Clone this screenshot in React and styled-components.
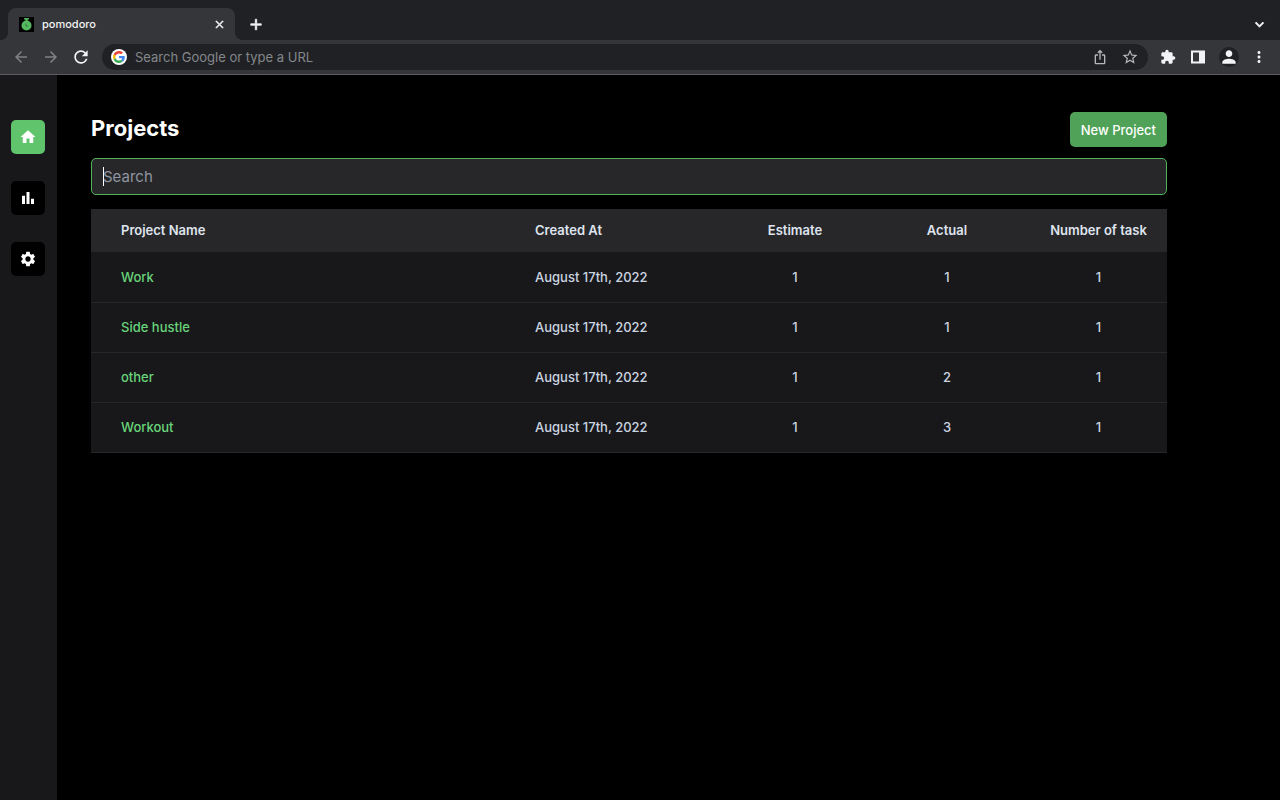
import React, { useState } from 'react';
import styled, { createGlobalStyle } from 'styled-components';
import {
  MdAdd,
  MdArrowBack,
  MdArrowForward,
  MdBarChart,
  MdClose,
  MdExtension,
  MdHome,
  MdIosShare,
  MdKeyboardArrowDown,
  MdMoreVert,
  MdPerson,
  MdRefresh,
  MdSettings,
  MdStarBorder,
} from 'react-icons/md';

const GlobalStyle = createGlobalStyle`
  * {
    box-sizing: border-box;
  }
  body {
    margin: 0;
    background-color: #000000;
    color: #e2e8f0;
    font-family: 'Inter', sans-serif;
    font-size: 13px;
  }
  button,
  input {
    font-family: inherit;
  }
`;

const Window = styled.div`
  display: flex;
  flex-direction: column;
  min-height: 100vh;
`;

const TabStrip = styled.div`
  display: flex;
  align-items: flex-end;
  height: 40px;
  padding: 0 10px 0 8px;
  background-color: #202124;
`;

const Tab = styled.div`
  position: relative;
  display: flex;
  align-items: center;
  width: 227px;
  height: 32px;
  padding: 0 8px 0 11px;
  border-radius: 8px 8px 0 0;
  background-color: #35363a;

  &::before,
  &::after {
    content: '';
    position: absolute;
    bottom: 0;
    width: 8px;
    height: 8px;
  }
  &::before {
    right: 100%;
    background: radial-gradient(circle at 0 0, transparent 8px, #35363a 8px);
  }
  &::after {
    left: 100%;
    background: radial-gradient(circle at 100% 0, transparent 8px, #35363a 8px);
  }
`;

const TabTitle = styled.span`
  flex: 1;
  margin-left: 8px;
  color: #f1f3f4;
  font-size: 11px;
  font-weight: 500;
`;

const IconButton = styled.button`
  display: flex;
  align-items: center;
  justify-content: center;
  flex: none;
  width: ${(props) => props.$width || 16}px;
  height: 28px;
  padding: 0;
  border: none;
  background: none;
  color: ${(props) => props.$color || '#f1f3f4'};
  font-size: ${(props) => props.$size || 16}px;
  cursor: pointer;

  svg {
    stroke-width: ${(props) => (props.$bold ? 1 : 0)};
  }
  path[fill='none'] {
    stroke: none;
  }
`;

const NewTabArea = styled.div`
  display: flex;
  flex: 1;
  align-items: center;
  justify-content: space-between;
  height: 32px;
  padding-left: 12px;
`;

const Toolbar = styled.div`
  display: flex;
  align-items: center;
  height: 35px;
  padding: 0 6px;
  border-bottom: 1px solid #5c5d60;
  background-color: #35363a;
`;

const AddressBar = styled.div`
  display: flex;
  flex: 1;
  align-items: center;
  height: 26px;
  margin: 0 5px 0 6px;
  padding: 0 3px 0 9px;
  border-radius: 13px;
  background-color: #202124;
`;

const GoogleBadge = styled.span`
  display: flex;
  align-items: center;
  justify-content: center;
  width: 16px;
  height: 16px;
  border-radius: 50%;
  background-color: #ffffff;
`;

const AddressInput = styled.input`
  flex: 1;
  min-width: 0;
  margin-left: 8px;
  padding: 0;
  border: none;
  outline: none;
  background: none;
  color: #e8eaed;
  font-size: 13px;
  &::placeholder {
    color: #84878b;
    opacity: 1;
  }
`;

const ToolbarActions = styled.div`
  display: flex;
  align-items: center;
`;

const Avatar = styled.span`
  display: flex;
  align-items: center;
  justify-content: center;
  width: 20px;
  height: 20px;
  border-radius: 50%;
  background-color: #202124;
`;

const Page = styled.div`
  display: flex;
  flex: 1;
`;

const Sidebar = styled.nav`
  display: flex;
  flex-direction: column;
  flex: none;
  gap: 27px;
  width: 57px;
  padding: 45px 12px 0 11px;
  background-color: #18181b;
`;

const SidebarLink = styled.a`
  display: flex;
  align-items: center;
  justify-content: center;
  height: 34px;
  border-radius: 5px;
  background-color: ${(props) => (props.$active ? '#5fc46b' : '#000000')};
  color: #ffffff;
  font-size: 18px;
`;

const Content = styled.main`
  flex: 1;
  padding: 37px 113px 0 34px;
`;

const Header = styled.header`
  display: flex;
  align-items: flex-start;
  justify-content: space-between;
  margin-bottom: 11px;
`;

const Title = styled.h1`
  margin: 0;
  color: #ffffff;
  font-size: 22px;
  font-weight: 700;
  line-height: 32px;
`;

const PrimaryButton = styled.button`
  height: 35px;
  padding: 0 11px;
  border: none;
  border-radius: 5px;
  background-color: #4fa257;
  color: #ffffff;
  font-size: 13px;
  font-weight: 500;
  cursor: pointer;
`;

const SearchField = styled.div`
  position: relative;
  margin-bottom: 14px;

  &::before {
    content: '';
    position: absolute;
    top: 9px;
    left: 12px;
    width: 1px;
    height: 19px;
    background-color: #ffffff;
  }
`;

const SearchInput = styled.input`
  display: block;
  width: 100%;
  height: 37px;
  padding: 0 11px;
  border: 1px solid #4fb35a;
  border-radius: 5px;
  outline: none;
  background-color: #27272a;
  caret-color: transparent;
  color: #e2e8f0;
  font-size: 15px;
  &::placeholder {
    color: #8f95a1;
    opacity: 1;
  }
`;

const Table = styled.table`
  width: 100%;
  border-collapse: collapse;
  table-layout: fixed;
  font-size: 13px;
  font-weight: 500;
`;

const Col = styled.col`
  width: ${(props) => props.$width};
`;

const HeadCell = styled.th`
  height: 43px;
  padding: 0 ${(props) => (props.$center ? 0 : 30)}px 2px;
  background-color: #27272a;
  color: #dfe4ee;
  font-weight: 600;
  text-align: ${(props) => (props.$center ? 'center' : 'left')};
  white-space: nowrap;
`;

const Row = styled.tr`
  border-bottom: 1px solid #27272a;
  background-color: #18181b;
`;

const Cell = styled.td`
  height: 50px;
  padding: 0 ${(props) => (props.$center ? 0 : 30)}px;
  color: #cbd5e1;
  text-align: ${(props) => (props.$center ? 'center' : 'left')};
`;

const ProjectLink = styled.a`
  color: #68d47a;
  text-decoration: none;
`;

const PROJECTS = [
  { name: 'Work', createdAt: 'August 17th, 2022', estimate: 1, actual: 1, tasks: 1 },
  { name: 'Side hustle', createdAt: 'August 17th, 2022', estimate: 1, actual: 1, tasks: 1 },
  { name: 'other', createdAt: 'August 17th, 2022', estimate: 1, actual: 2, tasks: 1 },
  { name: 'Workout', createdAt: 'August 17th, 2022', estimate: 1, actual: 3, tasks: 1 },
];

function PomodoroIcon() {
  return (
    <svg width="15" height="15" viewBox="0 0 30 30" aria-hidden="true">
      <rect width="30" height="30" fill="#000000" />
      <rect x="10" y="2" width="10" height="3" rx="1" fill="#56b962" />
      <rect x="13" y="4" width="4" height="4" fill="#56b962" />
      <circle cx="15" cy="17" r="10" fill="#56b962" />
      <path d="M14 13v5h4" fill="none" stroke="#2f7a39" strokeWidth="2" />
    </svg>
  );
}

function GoogleIcon() {
  return (
    <svg width="12" height="12" viewBox="0 0 48 48" aria-hidden="true">
      <path
        fill="#ea4335"
        d="M24 9.5c3.54 0 6.71 1.22 9.21 3.6l6.85-6.85C35.9 2.38 30.47 0 24 0 14.62 0 6.51 5.38 2.56 13.22l7.98 6.19C12.43 13.72 17.74 9.5 24 9.5z"
      />
      <path
        fill="#4285f4"
        d="M46.98 24.55c0-1.57-.15-3.09-.38-4.55H24v9.02h12.94c-.58 2.96-2.26 5.48-4.78 7.18l7.73 6c4.51-4.18 7.09-10.36 7.09-17.65z"
      />
      <path
        fill="#fbbc05"
        d="M10.53 28.59c-.48-1.45-.76-2.99-.76-4.59s.27-3.14.76-4.59l-7.98-6.19C.92 16.46 0 20.12 0 24c0 3.88.92 7.54 2.56 10.78l7.97-6.19z"
      />
      <path
        fill="#34a853"
        d="M24 48c6.48 0 11.93-2.13 15.89-5.81l-7.73-6c-2.15 1.45-4.92 2.3-8.16 2.3-6.26 0-11.57-4.22-13.47-9.91l-7.98 6.19C6.51 42.62 14.62 48 24 48z"
      />
    </svg>
  );
}

function SidePanelIcon() {
  return (
    <svg width="16" height="14" viewBox="0 0 16 14" aria-hidden="true">
      <path fill="#f1f3f4" fillRule="evenodd" d="M1 0.5h14v13H1zM3 2.5v9h6v-9z" />
    </svg>
  );
}

function BrowserBar() {
  return (
    <>
      <TabStrip>
        <Tab>
          <PomodoroIcon />
          <TabTitle>pomodoro</TabTitle>
          <IconButton $size={13} $bold aria-label="Close tab">
            <MdClose />
          </IconButton>
        </Tab>
        <NewTabArea>
          <IconButton $width={18} $size={19} $bold aria-label="New tab">
            <MdAdd />
          </IconButton>
          <IconButton $width={22} $size={17} $bold aria-label="Search tabs">
            <MdKeyboardArrowDown />
          </IconButton>
        </NewTabArea>
      </TabStrip>
      <Toolbar>
        <IconButton $width={30} $size={18} $color="#7f8185" aria-label="Back">
          <MdArrowBack />
        </IconButton>
        <IconButton $width={30} $size={18} $color="#7f8185" aria-label="Forward">
          <MdArrowForward />
        </IconButton>
        <IconButton $width={30} $size={20} aria-label="Reload">
          <MdRefresh />
        </IconButton>
        <AddressBar>
          <GoogleBadge>
            <GoogleIcon />
          </GoogleBadge>
          <AddressInput
            type="text"
            aria-label="Address"
            placeholder="Search Google or type a URL"
          />
          <IconButton $width={30} $color="#b4b7bb" aria-label="Share">
            <MdIosShare />
          </IconButton>
          <IconButton $width={30} $size={18} $color="#b4b7bb" aria-label="Bookmark">
            <MdStarBorder />
          </IconButton>
        </AddressBar>
        <ToolbarActions>
          <IconButton $width={30} aria-label="Extensions">
            <MdExtension />
          </IconButton>
          <IconButton $width={30} aria-label="Side panel">
            <SidePanelIcon />
          </IconButton>
          <IconButton $width={31} $size={20} aria-label="Profile">
            <Avatar>
              <MdPerson />
            </Avatar>
          </IconButton>
          <IconButton $width={30} $size={18} aria-label="Menu">
            <MdMoreVert />
          </IconButton>
        </ToolbarActions>
      </Toolbar>
    </>
  );
}

function ProjectTable({ projects }) {
  return (
    <Table>
      <colgroup>
        <Col />
        <Col $width="221px" />
        <Col $width="138px" />
        <Col $width="166px" />
        <Col $width="137px" />
      </colgroup>
      <thead>
        <tr>
          <HeadCell>Project Name</HeadCell>
          <HeadCell>Created At</HeadCell>
          <HeadCell $center>Estimate</HeadCell>
          <HeadCell $center>Actual</HeadCell>
          <HeadCell $center>Number of task</HeadCell>
        </tr>
      </thead>
      <tbody>
        {projects.map((project) => (
          <Row key={project.name}>
            <Cell>
              <ProjectLink href={`#${project.name}`}>{project.name}</ProjectLink>
            </Cell>
            <Cell>{project.createdAt}</Cell>
            <Cell $center>{project.estimate}</Cell>
            <Cell $center>{project.actual}</Cell>
            <Cell $center>{project.tasks}</Cell>
          </Row>
        ))}
      </tbody>
    </Table>
  );
}

function App() {
  const [query, setQuery] = useState('');

  const projects = PROJECTS.filter(
    (project) => project.name.toUpperCase().indexOf(query.toUpperCase()) > -1
  );

  return (
    <Window>
      <GlobalStyle />
      <BrowserBar />
      <Page>
        <Sidebar>
          <SidebarLink $active href="#home" aria-label="Home">
            <MdHome />
          </SidebarLink>
          <SidebarLink href="#stats" aria-label="Statistics">
            <MdBarChart />
          </SidebarLink>
          <SidebarLink href="#settings" aria-label="Settings">
            <MdSettings />
          </SidebarLink>
        </Sidebar>
        <Content>
          <Header>
            <Title>Projects</Title>
            <PrimaryButton type="button">New Project</PrimaryButton>
          </Header>
          <SearchField>
            <SearchInput
              type="text"
              aria-label="Search projects"
              placeholder="Search"
              value={query}
              onChange={(e) => setQuery(e.target.value)}
            />
          </SearchField>
          <ProjectTable projects={projects} />
        </Content>
      </Page>
    </Window>
  );
}

export default App;
